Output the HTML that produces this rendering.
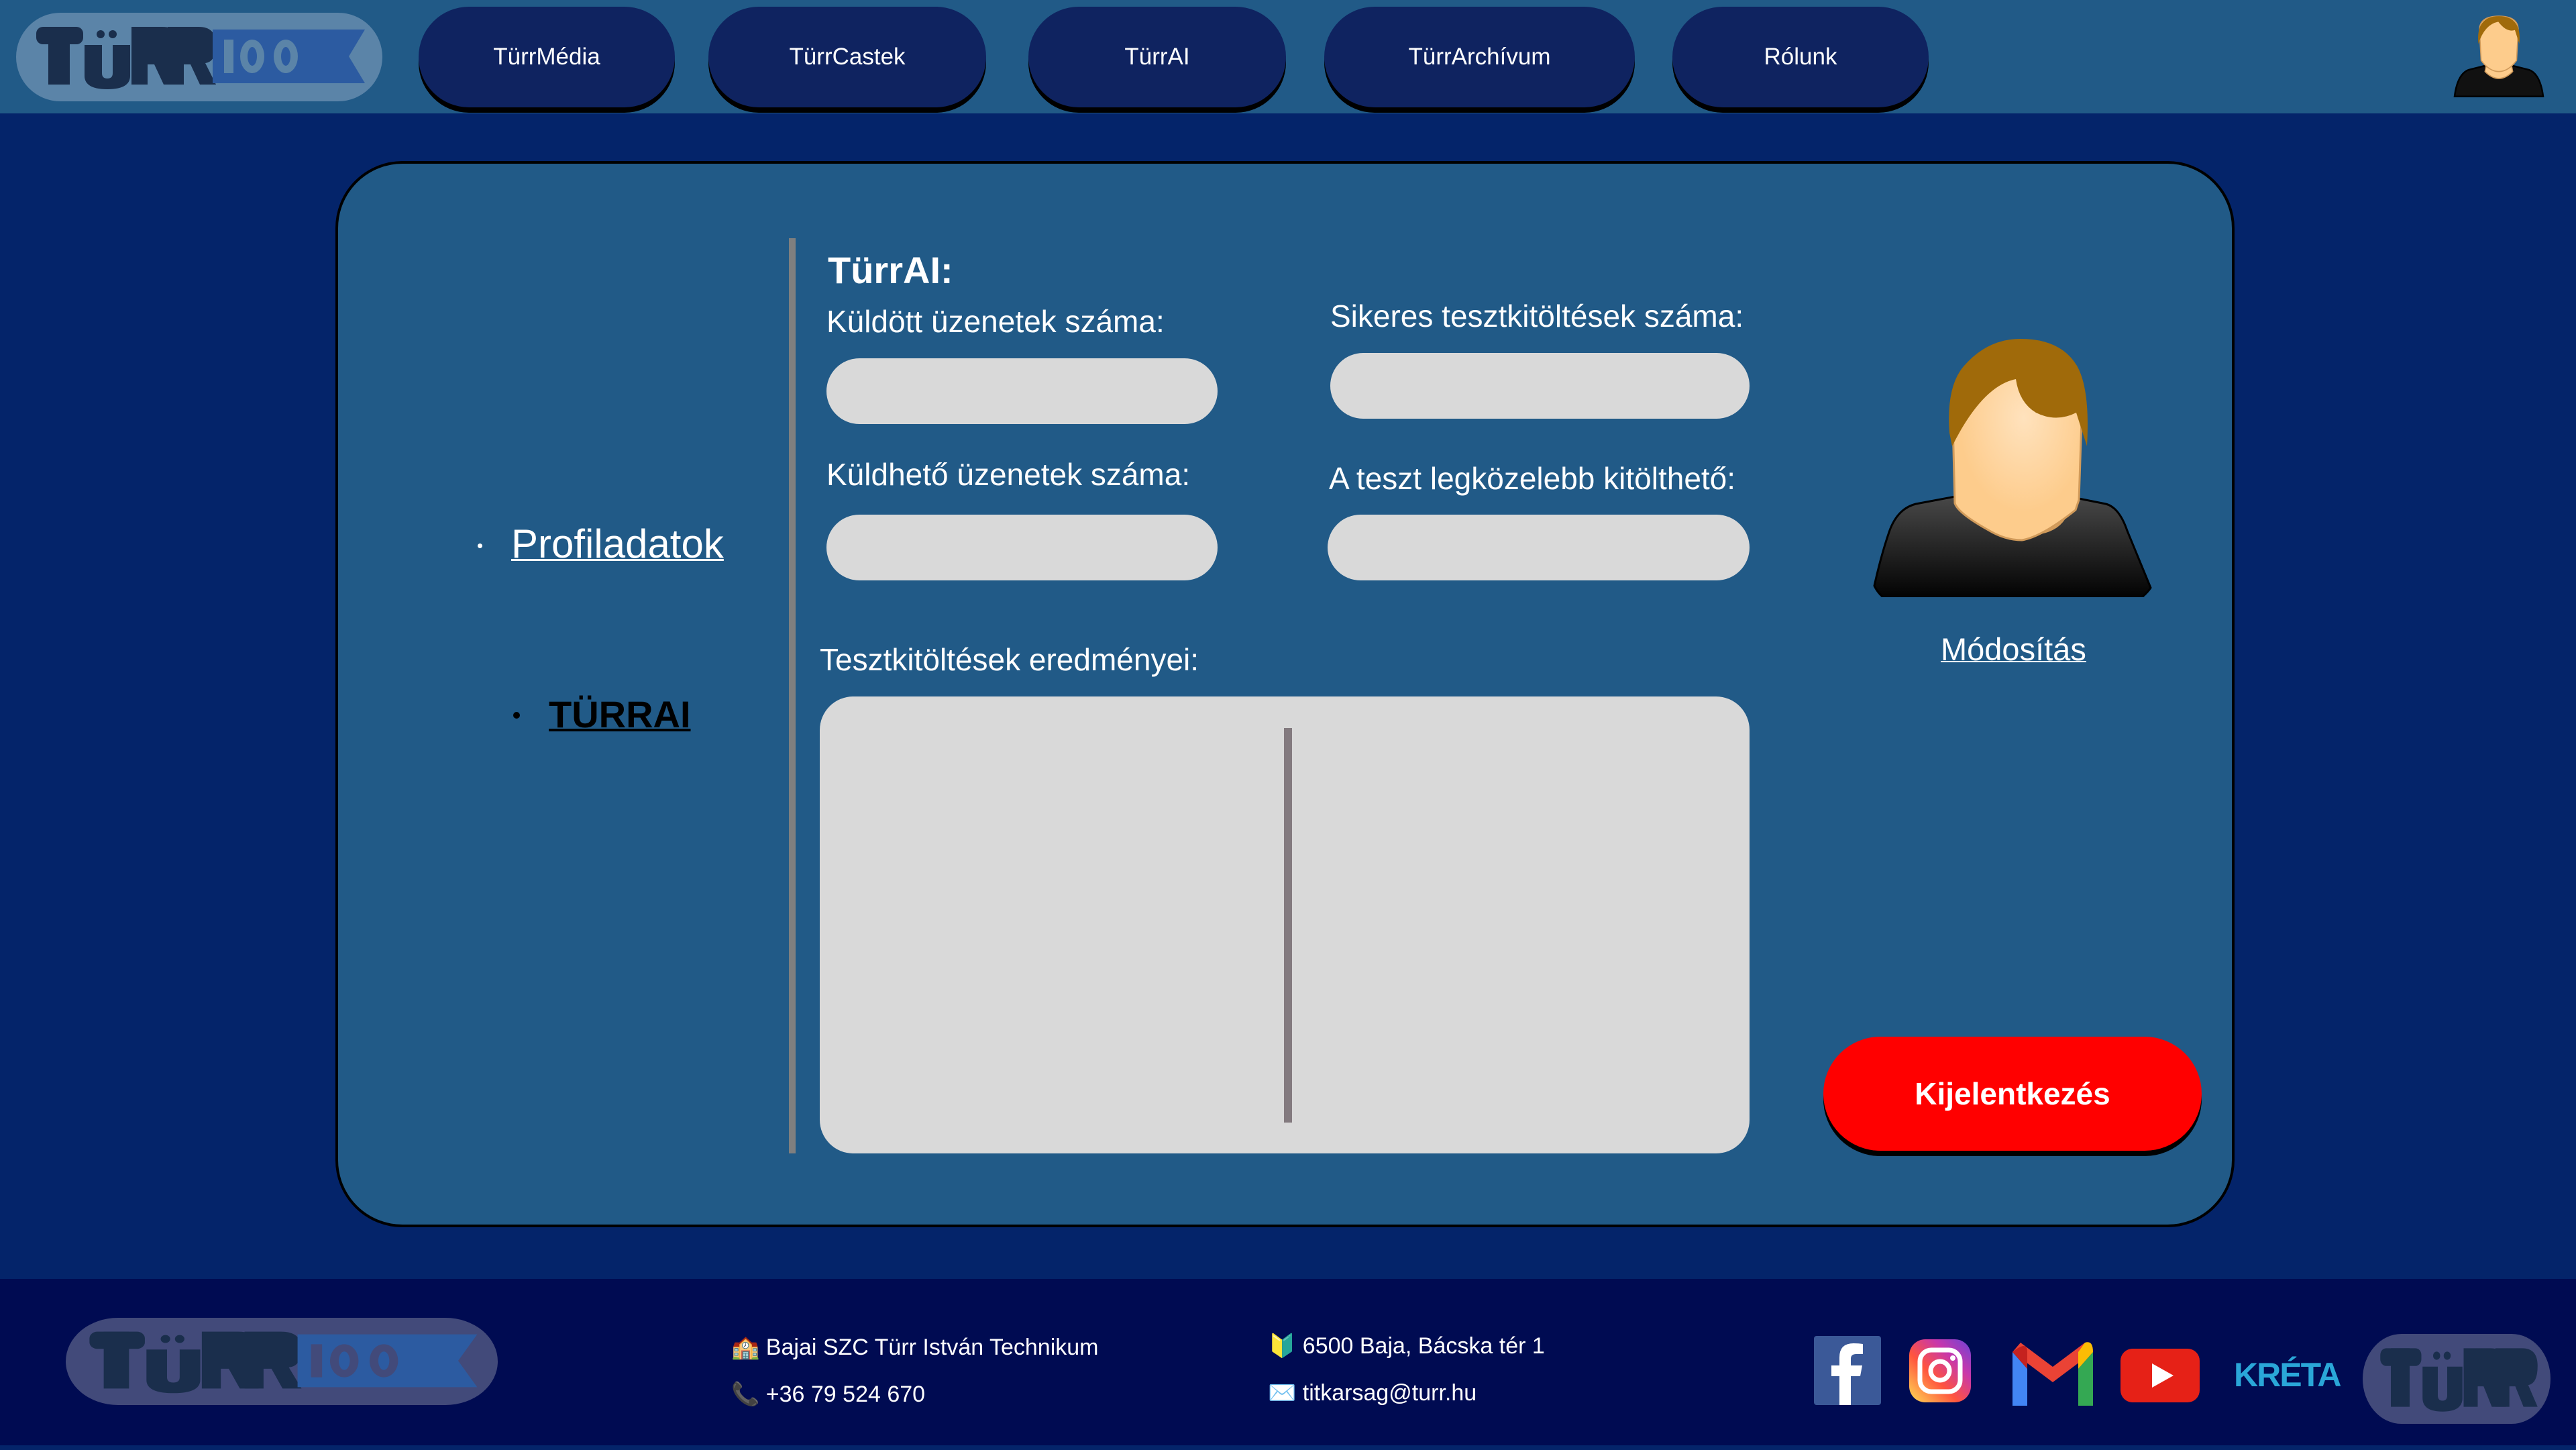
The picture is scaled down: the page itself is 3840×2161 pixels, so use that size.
<!DOCTYPE html>
<html><head><meta charset="utf-8"><style>
*{margin:0;padding:0;box-sizing:border-box}
body{width:3840px;height:2161px;background:#04246a;font-family:"Liberation Sans",sans-serif;position:relative;overflow:hidden;color:#fff}
.abs{position:absolute}
#hdr{left:0;top:0;width:3840px;height:169px;background:#215a87}
.nav{position:absolute;top:10px;height:150px;background:#0f2360;border-radius:75px/75px;box-shadow:0 8px 0 #000;display:flex;align-items:center;justify-content:center;font-size:35px;color:#fff}
#card{left:500px;top:240px;width:2831px;height:1589px;background:#215a87;border:4px solid #000;border-radius:100px}
.lbl{position:absolute;font-size:46px;color:#fff;white-space:nowrap}
.inp{position:absolute;background:#d9d9d9;border-radius:50px;height:98px}
#foot{left:0;top:1906px;width:3840px;height:248px;background:#000b52}
.ft{position:absolute;font-size:34px;color:#fff;white-space:nowrap}
</style></head><body>
<div id="hdr" class="abs"></div>
<svg width="0" height="0" style="position:absolute"><defs>
<g id="letters" fill="#1a2e4c">
<rect x="30" y="21" width="70" height="26" rx="10"/><rect x="48" y="21" width="32" height="86"/>
<path d="M102 48h26v42q0 8 8 8t8-8V48h26v46q0 20-34 20t-34-20z"/>
<circle cx="126" cy="32" r="6"/><circle cx="144" cy="32" r="6"/>
<path d="M172 21h46q26 0 26 26t-16 28l16 32h-24l-14-30h-10v30h-24z" fill-rule="evenodd"/>
<path d="M226 21h46q26 0 26 26t-16 28l16 32h-24l-14-30h-10v30h-24z"/>
</g></defs></svg>
<!-- header logo -->
<svg class="abs" style="left:24px;top:19px" width="546" height="132" viewBox="0 0 546 132" preserveAspectRatio="none">
<rect x="0" y="0" width="546" height="132" rx="66" fill="#5b84a8"/>
<use href="#letters"/>
<path d="M293 25h227l-24 40 24 40H293z" fill="#2c5ba1"/>
<g fill="#5b84a8"><rect x="310" y="40" width="14" height="50"/><ellipse cx="352" cy="65" rx="18" ry="25"/><ellipse cx="402" cy="65" rx="18" ry="25"/></g>
<g fill="#2c5ba1"><ellipse cx="352" cy="65" rx="7" ry="14"/><ellipse cx="402" cy="65" rx="7" ry="14"/></g>
</svg>
<div class="nav" style="left:624px;width:382px">TürrMédia</div>
<div class="nav" style="left:1056px;width:414px">TürrCastek</div>
<div class="nav" style="left:1533px;width:384px">TürrAI</div>
<div class="nav" style="left:1974px;width:463px">TürrArchívum</div>
<div class="nav" style="left:2493px;width:382px">Rólunk</div>
<!-- small avatar -->
<svg class="abs" style="left:3654px;top:20px" width="142" height="132" viewBox="0 0 170 160">
<path d="M5 150q5-40 25-48l40-10h30l40 10q20 8 25 48z" fill="#111" stroke="#000" stroke-width="3"/>
<path d="M65 80l-5 25q25 25 50 0l-5-25z" fill="#fdcc8c" stroke="#d09a5a" stroke-width="2"/>
<path d="M50 30q0-25 35-25t35 25l-3 55q-15 20-32 20t-32-20z" fill="#fdcc8c" stroke="#d09a5a" stroke-width="2"/>
<path d="M48 55q-5-50 37-50t37 50l-8-25q-15 5-30-15-25 5-36 40z" fill="#a06a0a"/>
</svg>

<div id="card" class="abs"></div>
<div class="abs" style="left:1176px;top:355px;width:10px;height:1364px;background:#7f7f7f"></div>
<div class="lbl" style="left:1234px;top:370px;font-size:56px;font-weight:bold">TürrAI:</div>
<div class="lbl" style="left:1232px;top:452px">Küldött üzenetek száma:</div>
<div class="inp" style="left:1232px;top:534px;width:583px"></div>
<div class="lbl" style="left:1983px;top:444px">Sikeres tesztkitöltések száma:</div>
<div class="inp" style="left:1983px;top:526px;width:625px"></div>
<div class="lbl" style="left:1232px;top:680px">Küldhető üzenetek száma:</div>
<div class="inp" style="left:1232px;top:767px;width:583px"></div>
<div class="lbl" style="left:1981px;top:686px">A teszt legközelebb kitölthető:</div>
<div class="inp" style="left:1979px;top:767px;width:629px"></div>
<div class="lbl" style="left:1222px;top:956px">Tesztkitöltések eredményei:</div>
<div class="abs" style="left:1222px;top:1038px;width:1386px;height:681px;background:#d9d9d9;border-radius:50px"></div>
<div class="abs" style="left:1914px;top:1085px;width:12px;height:588px;background:#837a7f"></div>

<div class="abs" style="left:712px;top:810px;width:7px;height:7px;border-radius:50%;background:#fff"></div>
<div class="lbl" style="left:762px;top:776px;font-size:60px;text-decoration:underline;text-decoration-thickness:3px">Profiladatok</div>
<div class="abs" style="left:765px;top:1061px;width:10px;height:10px;border-radius:50%;background:#000"></div>
<div class="lbl" style="left:818px;top:1032px;font-size:56px;font-weight:bold;color:#000;text-decoration:underline;text-decoration-thickness:4px">TÜRRAI</div>

<!-- big avatar -->
<svg class="abs" style="left:2780px;top:490px" width="440" height="400" viewBox="0 0 440 400">
<defs><linearGradient id="sh" x1="0" y1="0" x2="0" y2="1"><stop offset="0" stop-color="#4a4a4a"/><stop offset="1" stop-color="#000"/></linearGradient>
<radialGradient id="fc" cx="0.55" cy="0.35" r="0.5"><stop offset="0" stop-color="#ffe2bd"/><stop offset="1" stop-color="#fdcc8c"/></radialGradient></defs>
<path d="M14 383q10-45 22-80t40-42l80-15h128l75 15q20 5 32 40l35 85q-5 8-20 20H36q-15-8-22-23z" fill="url(#sh)" stroke="#000" stroke-width="3"/>
<path d="M164 215l-8 50q20 42 80 42t68-42l-6-50z" fill="#fdcc8c" stroke="#d09a5a" stroke-width="3"/>
<path d="M130 100l4 160q5 15 50 40 25 15 50 15 30-5 80-45l5-15 5-150q-50-70-100-70-70 0-94 65z" fill="url(#fc)" stroke="#d09a5a" stroke-width="3"/>
<path d="M126 155q-5-70 22-100 35-40 84-40 60 0 84 40 20 35 15 120l-16-50q-30 15-60 0-25-15-30-50-50 10-95 100z" fill="#a06a0a"/>
</svg>
<div class="lbl" style="left:2893px;top:940px;font-size:47px;text-decoration:underline;text-decoration-thickness:2px">Módosítás</div>

<div class="abs" style="left:2718px;top:1545px;width:564px;height:170px;background:#ff0000;border-radius:85px;box-shadow:0 8px 0 #000;display:flex;align-items:center;justify-content:center;font-size:46px;font-weight:bold">Kijelentkezés</div>

<div id="foot" class="abs"></div>
<!-- footer logo -->
<svg class="abs" style="left:98px;top:1964px" width="644" height="130" viewBox="0 0 546 132" preserveAspectRatio="none">
<rect x="0" y="0" width="546" height="132" rx="66" fill="#424a7a"/>
<use href="#letters"/>
<path d="M293 25h227l-24 40 24 40H293z" fill="#2c5ba1"/>
<g fill="#424a7a"><rect x="310" y="40" width="14" height="50"/><ellipse cx="352" cy="65" rx="18" ry="25"/><ellipse cx="402" cy="65" rx="18" ry="25"/></g>
<g fill="#2c5ba1"><ellipse cx="352" cy="65" rx="7" ry="14"/><ellipse cx="402" cy="65" rx="7" ry="14"/></g>
</svg>
<div class="ft" style="left:1090px;top:1988px">🏫 Bajai SZC Türr István Technikum</div>
<div class="ft" style="left:1090px;top:2058px">📞 +36 79 524 670</div>
<div class="ft" style="left:1890px;top:1986px">🔰 6500 Baja, Bácska tér 1</div>
<div class="ft" style="left:1890px;top:2056px">✉️ titkarsag@turr.hu</div>
<!-- icons -->
<svg class="abs" style="left:2704px;top:1991px" width="100" height="103" viewBox="0 0 100 103"><rect width="100" height="103" rx="4" fill="#3b5998"/><path d="M55 103V60h14l3-16H55v-10q0-7 8-7h10V12q-6-1-14-1-21 0-21 21v12H26v16h12v43z" fill="#fff"/></svg>
<svg class="abs" style="left:2846px;top:1996px" width="92" height="94" viewBox="0 0 92 94"><defs><linearGradient id="ig" x1="0" y1="1" x2="1" y2="0"><stop offset="0" stop-color="#fd5"/><stop offset=".4" stop-color="#ff543e"/><stop offset=".7" stop-color="#c837ab"/><stop offset="1" stop-color="#6a43d8"/></linearGradient></defs><rect width="92" height="94" rx="24" fill="url(#ig)"/><rect x="16" y="16" width="60" height="62" rx="17" fill="none" stroke="#fff" stroke-width="7"/><circle cx="46" cy="47" r="14" fill="none" stroke="#fff" stroke-width="7"/><circle cx="65" cy="28" r="4" fill="#fff"/></svg>
<svg class="abs" style="left:2996px;top:1995px" width="128" height="104" viewBox="0 0 128 104"><path d="M4 20v80h22V45z" fill="#4285f4"/><path d="M102 45v55h22V20z" fill="#34a853"/><path d="M4 20l60 45 60-45-12-14L64 42 16 6z" fill="#ea4335"/><path d="M102 20v25l22-25q0-18-12-14z" fill="#fbbc04"/><path d="M4 20l22 25V20q0-18-22 0z" fill="#c5221f"/></svg>
<svg class="abs" style="left:3161px;top:2010px" width="118" height="80" viewBox="0 0 118 80"><rect width="118" height="80" rx="18" fill="#e62117"/><path d="M47 22v36l32-18z" fill="#fff"/></svg>
<div class="abs" style="left:3330px;top:2020px;font-size:50px;font-weight:bold;color:#2aa7d8;letter-spacing:-2px">KRÉTA</div>
<svg class="abs" style="left:3522px;top:1988px" width="280" height="134" viewBox="0 0 320 132" preserveAspectRatio="none"><rect width="320" height="132" rx="66" fill="#424a7a"/><use href="#letters"/></svg>
</body></html>
